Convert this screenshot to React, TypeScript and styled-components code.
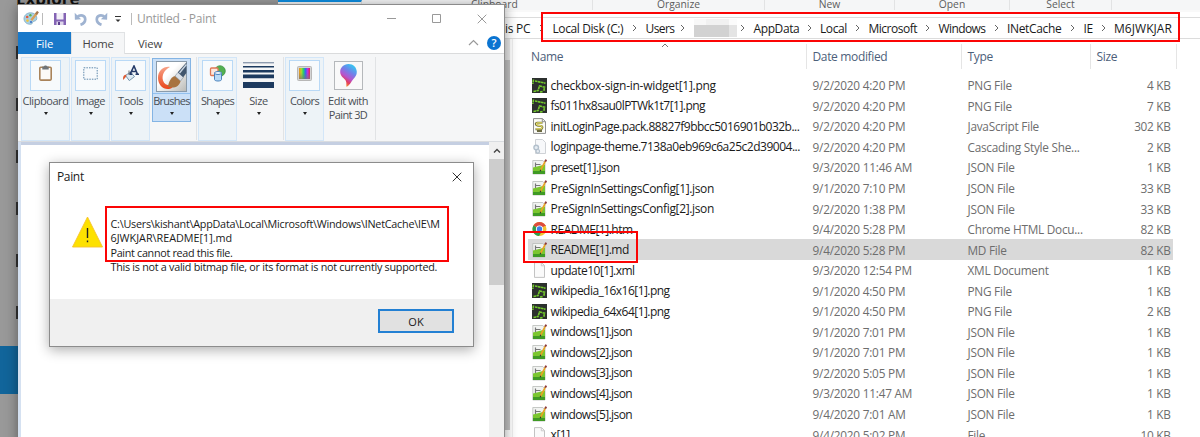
import styled, { createGlobalStyle } from "styled-components";

const GlobalStyle = createGlobalStyle`
  * {
    box-sizing: border-box;
  }
  body {
    margin: 0;
    overflow: hidden;
    font-family: "Open Sans", "Noto Sans", sans-serif;
    font-size: 12px;
    color: #1a1a1a;
  }
  svg {
    display: block;
    flex: none;
  }
`;

const Desktop = styled.main`
  position: relative;
  width: 1200px;
  height: 437px;
  overflow: hidden;
  background: #fff;
`;

const Txt = styled.span<{ $track?: number }>`
  white-space: pre;
  letter-spacing: ${(p) => p.$track ?? 0}px;
`;

/* page behind the windows */

const Backdrop = styled.div`
  position: absolute;
  left: 0;
  top: 0;
  width: 278px;
  height: 437px;
  background: #999;
`;

const BackdropTitle = styled.h2`
  margin: 0 0 0 16px;
  height: 5px;
  font-size: 17px;
  font-weight: 700;
  line-height: 20px;
  color: #111;
  overflow: hidden;

  span {
    display: block;
    margin-top: -11px;
  }
`;

const Stubs = styled.div`
  display: flex;
  flex-direction: column;
  gap: 39px;
  margin: 41px 0 0 16px;
`;

const Stub = styled.div`
  width: 4px;
  height: 13px;
  background: #333;
`;

const BlueBlock = styled.div`
  height: 48px;
  margin-top: 27px;
  background: #11659b;
`;

/* explorer */

const Explorer = styled.section`
  position: absolute;
  left: 278px;
  top: 0;
  width: 922px;
  height: 437px;
  background: #fff;
  display: flex;
  flex-direction: column;
`;

const Groups = styled.div`
  display: flex;
  height: 12px;
  background: #f5f6f7;
  border-bottom: 2px solid #f9f9f9;
`;

const Group = styled.div<{ $w: number; $blue?: boolean }>`
  width: ${(p) => p.$w}px;
  height: 10px;
  flex: none;
  border-right: 1px solid #e2e3e4;
  border-top: ${(p) => (p.$blue ? "2px solid #0d8de0" : "0")};
  font-size: 10.3px;
  line-height: 8px;
  color: #5c5c5c;
  text-align: center;
`;

const Address = styled.div`
  display: flex;
  height: 22px;
  margin: 5px 0 0 210px;
  padding-left: 16px;
  border: 1px solid #dcdcdc;
  border-right: 0;
  align-items: center;
`;

const Crumb = styled.div<{ $w: number }>`
  display: flex;
  flex: none;
  align-items: center;
  justify-content: space-between;
  width: ${(p) => p.$w}px;
  padding-right: 8.5px;
  font-size: 12px;
`;

const Redacted = styled.div`
  display: grid;
  grid-template: 6px 12px / 12px 12px 11px 8px;
  width: 42px;
  height: 18px;

  i:nth-child(-n + 4) {
    background: #f1f1f1;
  }
  i:nth-child(1) {
    background: #f8f8f8;
  }
  i:nth-child(4) {
    background: #fbfbfb;
  }
  i:nth-child(n + 5) {
    background: #d2d2d2;
  }
  i:nth-child(8) {
    background: #e4e4e4;
  }
`;

const Body = styled.div`
  display: flex;
  flex: 1;
  min-height: 0;
`;

const NavScroll = styled.div`
  width: 7px;
  height: 391px;
  margin-left: 225px;
  border-top: 21px solid #e9e9e9;
  background: #c2c2c2;
`;

const NavEdge = styled.div`
  width: 3px;
  border-right: 1px solid #efefef;
`;

const Table = styled.div`
  flex: 1;
  padding: 5px 0 0 12px;
`;

const columns = "281.5px 155px 129px 86.5px";

const Head = styled.div`
  display: grid;
  grid-template-columns: ${columns};
  width: 652px;
  height: 25px;
  margin-bottom: 6px;
  font-size: 12px;
  color: #4c607a;
`;

const HeadCell = styled.div`
  display: flex;
  align-items: center;
  padding-left: 6px;
  border-right: 1px solid #e5e5e5;
`;

const SortMark = styled.svg`
  margin: -22px 0 0 98px;
`;

const Row = styled.div<{ $selected?: boolean }>`
  display: grid;
  grid-template-columns: ${columns};
  align-items: center;
  width: 645px;
  height: 20.56px;
  margin-left: 3px;
  background: ${(p) => (p.$selected ? "#d9d9d9" : "transparent")};
`;

const NameCell = styled.div`
  display: flex;
  align-items: center;
  gap: 3.6px;
  padding-left: 4px;
  font-size: 12px;
`;

const Cell = styled.div<{ $right?: boolean }>`
  padding: 0 ${(p) => (p.$right ? 9.5 : 0)}px 0 3px;
  font-size: 11.8px;
  color: #6d6d6d;
  text-align: ${(p) => (p.$right ? "right" : "left")};
`;

/* paint window */

const PaintWindow = styled.section`
  position: absolute;
  left: 18px;
  top: 4px;
  width: 487px;
  height: 480px;
  background: #fff;
  border-top: 1px solid #8b8b8b;
  border-right: 1px solid #8e8e8e;
  box-shadow: 0 2px 12px rgba(0, 0, 0, 0.42);
`;

const TitleBar = styled.div`
  display: flex;
  align-items: center;
  height: 27px;
  padding-left: 5px;
  font-size: 12px;
  color: #999;
`;

const TitleTools = styled.div`
  display: flex;
  align-items: center;
  width: 114px;
`;

const WindowButtons = styled.div`
  display: flex;
  gap: 36px;
  margin-left: auto;
  padding-right: 17px;
`;

const Tabs = styled.div`
  display: flex;
  height: 22px;
  border-bottom: 1px solid #dadbdc;
`;

const Tab = styled.div<{ $kind: "file" | "active" | "plain" }>`
  display: flex;
  align-items: center;
  justify-content: center;
  width: ${(p) => (p.$kind === "active" ? 54 : p.$kind === "file" ? 53 : 50)}px;
  height: 22px;
  font-size: 11.3px;
  letter-spacing: -0.2px;
  color: ${(p) => (p.$kind === "file" ? "#fff" : "#444")};
  background: ${(p) =>
    p.$kind === "file" ? "#1979ca" : p.$kind === "active" ? "#f5f6f7" : "transparent"};
  border: ${(p) => (p.$kind === "active" ? "1px solid #e0e2e4" : "0")};
  border-bottom: 0;
`;

const Help = styled.div`
  display: flex;
  align-items: center;
  gap: 8px;
  margin-left: auto;
  padding-right: 3px;
`;

const HelpDot = styled.div`
  width: 14px;
  height: 14px;
  border-radius: 50%;
  background: #0b74d1;
  color: #fff;
  font-size: 11px;
  font-weight: 600;
  line-height: 14px;
  text-align: center;
`;

const Ribbon = styled.div`
  display: flex;
  height: 88px;
  padding: 3px 0 0 3px;
  background: #f5f6f7;
  border-bottom: 1px solid #d9dce0;
`;

const Tool = styled.div<{ $w: number; $ml?: number; $kind?: "plain" | "hot" }>`
  display: flex;
  flex-direction: column;
  flex: none;
  align-items: center;
  width: ${(p) => p.$w}px;
  height: ${(p) => (p.$kind === "hot" ? 64 : 84)}px;
  margin-left: ${(p) => p.$ml ?? 1}px;
  margin-top: ${(p) => (p.$kind === "hot" ? 1 : 0)}px;
  padding-top: ${(p) => (p.$kind === "hot" ? 0 : 2)}px;
  border: 1px solid
    ${(p) => (p.$kind === "hot" ? "#84b4e4" : p.$kind === "plain" ? "transparent" : "#d3e6f8")};
  background: ${(p) =>
    p.$kind === "hot" ? "#cbe0f7" : p.$kind === "plain" ? "transparent" : "#edf3f7"};
`;

const ToolIcon = styled.div<{ $kind?: "plain" | "hot" }>`
  display: flex;
  align-items: center;
  justify-content: center;
  width: ${(p) => (p.$kind === "hot" ? 37 : 31)}px;
  height: ${(p) => (p.$kind === "hot" ? 35 : 31)}px;
  padding-bottom: ${(p) => (p.$kind ? 0 : 5)}px;
  flex: none;
  border: ${(p) => (p.$kind ? 0 : 1)}px solid #b9d9f6;
  border-bottom: ${(p) => (p.$kind === "hot" ? "1px solid #93c0ed" : undefined)};
  background: ${(p) => (p.$kind ? "transparent" : "#f7fafc")};
`;

const ToolLabel = styled.div<{ $tight?: boolean }>`
  height: 14px;
  margin-top: ${(p) => (p.$tight ? 0 : 3)}px;
  font-size: 11px;
  line-height: 14px;
  color: #4a4f55;
  white-space: nowrap;
`;

const Drop = styled.i`
  margin-top: 4px;
  border: 2.5px solid transparent;
  border-top: 3px solid #222;
  border-bottom: 0;
`;

const Divider = styled.div<{ $ml: number }>`
  width: 1px;
  height: 83px;
  flex: none;
  margin-left: ${(p) => p.$ml}px;
  background: #e1e3e5;
`;

const Canvas = styled.div`
  display: flex;
  height: 340px;
  border-left: 3px solid #d5e1f1;
`;

const Paper = styled.div`
  flex: 1;
  border-top: 3px solid #c5cfe2;
`;

const Scroll = styled.div`
  width: 15px;
  background: #f0f0f0;
`;

const ScrollArrow = styled.div`
  display: flex;
  align-items: center;
  justify-content: center;
  height: 17px;
`;

const Thumb = styled.div`
  height: 126px;
  background: #cdcdcd;
`;

/* message box */

const Dialog = styled.section`
  position: absolute;
  left: 49px;
  top: 162px;
  width: 425px;
  height: 185px;
  display: flex;
  flex-direction: column;
  background: #fff;
  border: 1px solid #8c8c8c;
  box-shadow: 0 3px 12px rgba(0, 0, 0, 0.32);
`;

const DialogTitle = styled.div`
  display: flex;
  align-items: center;
  justify-content: space-between;
  height: 27px;
  padding: 0 11px 0 7px;
  font-size: 12px;
`;

const DialogBody = styled.div`
  display: flex;
  flex: 1;
  padding: 26px 0 0 22px;
  gap: 7.5px;
`;

const Message = styled.div`
  display: flex;
  flex-direction: column;
  margin-top: 1px;
  font-size: 10.8px;
  line-height: 14.4px;
`;

const DialogFooter = styled.div`
  display: flex;
  justify-content: flex-end;
  height: 47px;
  padding: 10px 19px 0 0;
  background: #f0f0f0;
`;

const OkButton = styled.button`
  width: 76px;
  height: 24px;
  padding: 0;
  border: 2px solid #2380d3;
  background: #e1e1e1;
  font: 11px "Open Sans", sans-serif;
  color: #1a1a1a;
`;

const Marker = styled.div<{ $x: number; $y: number; $w: number; $h: number }>`
  position: absolute;
  left: ${(p) => p.$x}px;
  top: ${(p) => p.$y}px;
  width: ${(p) => p.$w}px;
  height: ${(p) => p.$h}px;
  border: 2px solid #fb0505;
`;

/* icons */

const Chevron = () => (
  <svg width="5" height="8" viewBox="0 0 5 8" fill="none" stroke="#666" strokeWidth="1">
    <path d="M1 1l3 3-3 3" />
  </svg>
);

const Cross = ({ color }: { color: string }) => (
  <svg width="10" height="10" viewBox="0 0 10 10" stroke={color} strokeWidth="1">
    <path d="M.7.7l8.6 8.6M9.3.7L.7 9.3" />
  </svg>
);

const PngIcon = () => (
  <svg width="15" height="15" viewBox="0 0 15 15">
    <path fill="#2c302e" d="M0 0h15v15H0z" />
    <path
      d="M1.5 1.5L.8 6M3 3l10.500 2.200M1.500 13.500l4.500-1 1.500-4.500 5 1.200-.6 3.600M8 14l3-.4"
      fill="none"
      stroke="#74cc2c"
      strokeWidth="1.6"
      strokeDasharray="2.6 .5"
    />
  </svg>
);

const JsIcon = () => (
  <svg width="15" height="16" viewBox="0 0 15 16">
    <path d="M1.5.6h9l3 3v11.800h-12z" fill="#fcfcf6" stroke="#8e8e8e" />
    <path d="M10.300.7v3h3" fill="none" stroke="#8e8e8e" />
    <path
      d="M10.500 4.800H5.200c-2 0-1.800 2.400 0 2.600l3.600.5c2.300.4 2 3.300-.3 3.300H3.500M5 13h5"
      fill="none"
      stroke="#6b6940"
      strokeWidth="2"
    />
    <path d="M10 4.800H5.400c-1.300 0-1.400 2 0 2.400l3.600.7c1.600.4 1.400 2.800-.3 3H4" fill="none" stroke="#e5dd62" strokeWidth="1.2" />
  </svg>
);

const CssIcon = () => (
  <svg width="15" height="16" viewBox="0 0 15 16">
    <path d="M3.5.5h7l3 3v11h-10z" fill="#f7f8fa" stroke="#cfd2d6" />
    <circle cx="4.2" cy="8.5" r="2.3" fill="#e6ecf2" stroke="#b3c0cc" strokeWidth="1.4" />
    <circle cx="5.8" cy="12.3" r="1.8" fill="#e6ecf2" stroke="#b3c0cc" strokeWidth="1.2" />
  </svg>
);

const NppIcon = () => (
  <svg width="15" height="16" viewBox="0 0 15 16">
    <path d="M.8 1.5h10L13 4v11H.8z" fill="#f2f4f2" stroke="#b9bdb9" strokeWidth=".8" />
    <path d="M1 8.5l4-1 8-2V15H1z" fill="#7bc62f" />
    <path d="M1 12h12v3H1z" fill="#3f9a24" />
    <path d="M3.5 3.5V8M3.5 5.5h5" stroke="#777" strokeWidth="1.2" fill="none" />
    <path d="M13.4 2.2L8.6 11" stroke="#e7a324" strokeWidth="1.7" />
    <path d="M14.2.7l-1 1.9" stroke="#8c3b3b" strokeWidth="2" />
    <path d="M8.7 10.8l-.5 1.4" stroke="#333" strokeWidth="1.1" />
  </svg>
);

const ChromeIcon = () => (
  <svg width="15" height="16" viewBox="0 0 15 16">
    <circle cx="7.5" cy="8" r="7" fill="#f4c430" />
    <path d="M7.5 8L1.4 4.5A7 7 0 0 1 13.6 4.5z" fill="#dd4b3e" />
    <path d="M7.5 8L1.4 4.5A7 7 0 0 0 7 15l3-5z" fill="#2f9e4f" />
    <path d="M7.5 4.5h6.1" stroke="#dd4b3e" />
    <circle cx="7.5" cy="8" r="3.6" fill="#fff" />
    <circle cx="7.5" cy="8" r="2.7" fill="#3f7fe8" />
  </svg>
);

const BlankIcon = () => (
  <svg width="15" height="16" viewBox="0 0 15 16">
    <path d="M2.5.6h7l3 3v11.8h-10z" fill="#fafafa" stroke="#bcbcbc" strokeWidth=".9" />
    <path d="M9.3.7v3.1h3.1" fill="none" stroke="#c6c6c6" strokeWidth=".9" />
  </svg>
);

const icons = {
  png: PngIcon,
  js: JsIcon,
  css: CssIcon,
  npp: NppIcon,
  chrome: ChromeIcon,
  blank: BlankIcon,
};

const PaintIcon = () => (
  <svg width="17" height="15" viewBox="0 0 17 15">
    <path
      d="M7.5 1.8C3.8 1.8.8 4.4 1 8c.2 3.4 3.3 5.6 7 5.2 1.7-.2 1.2-1.8 2.2-2.6 1-.7 3.6-.4 3.6-3.3 0-3.3-2.7-5.5-6.3-5.5z"
      fill="#a8d0e4"
      stroke="#7fabc4"
      strokeWidth=".8"
    />
    <circle cx="4.2" cy="6" r="1.3" fill="#e25a3d" />
    <circle cx="7.4" cy="4.3" r="1.2" fill="#5caf4b" />
    <circle cx="4.5" cy="9.6" r="1.3" fill="#edc33d" />
    <circle cx="8" cy="11" r="1.1" fill="#4172c4" />
    <path d="M8.3 9.2L14 2" stroke="#d9a05a" strokeWidth="2.3" />
    <path d="M13 3.2L15 .6" stroke="#a5784e" strokeWidth="2.4" />
  </svg>
);

const SaveIcon = () => (
  <svg width="12" height="12" viewBox="0 0 12 12">
    <path d="M0 0h12v12H0z" fill="#8464b4" />
    <path d="M2.5 0h7v6.5h-7z" fill="#f3f0f8" />
    <path d="M2.5 8.5h7V12h-7z" fill="#ddd5ea" />
    <path d="M4 9h2v3H4z" fill="#5c3f8e" />
  </svg>
);

const UndoIcon = ({ flip }: { flip?: boolean }) => (
  <svg width="13" height="14" viewBox="0 0 13 14">
    <g transform={flip ? "matrix(-1 0 0 1 13 0)" : undefined}>
      <path d="M3 5.2c3.6-3.3 8.4-1.8 8.2 2.4-.1 2.5-1.9 4.2-4.7 5.2" fill="none" stroke="#9fb3d1" strokeWidth="2.7" />
      <path d="M.7.8l.2 7 6.2-.5z" fill="#9fb3d1" />
    </g>
  </svg>
);

const ClipboardIcon = () => (
  <svg width="15" height="17" viewBox="0 0 15 17">
    <rect x="1.8" y="2.3" width="11.4" height="12.8" rx="1" fill="#fbfaf8" stroke="#a9835a" strokeWidth="1.6" />
    <path d="M4.3 1.5h1.6C6.2.2 8.8.2 9.1 1.5h1.6v3H4.3z" fill="#6f7478" />
  </svg>
);

const SelectIcon = () => (
  <svg width="15" height="13" viewBox="0 0 15 13">
    <rect x=".8" y=".8" width="13.4" height="11.4" fill="none" stroke="#5d88ac" strokeWidth="1" strokeDasharray="1.5 1.1" />
  </svg>
);

const ToolsIcon = () => (
  <svg width="17" height="17" viewBox="0 0 17 17">
    <path d="M3.5 10.5L8.5 7l4 4.6-5.2 4z" fill="#dceaf3" stroke="#7695ad" />
    <path d="M4.5 9.5C1.8 9.6.6 11.8 1.2 15l2.6-3z" fill="#dc5a32" />
    <path d="M7 10V5.5" stroke="#6c6c6c" />
    <path d="M8 9.3L12 1l3.5 8.3M9.7 6.5h4.5M7.5 9.3h2.8M13.5 9.3H17" fill="none" stroke="#263c69" strokeWidth="1.6" />
  </svg>
);

const BrushIcon = () => (
  <svg width="31" height="31" viewBox="0 0 31 31">
    <defs>
      <linearGradient id="brushBg" x1="0" y1="0" x2="1" y2="1">
        <stop offset=".4" stopColor="#fff" />
        <stop offset="1" stopColor="#b9b9b5" />
      </linearGradient>
      <linearGradient id="stroke" x1="0" y1="0" x2="0" y2="1">
        <stop offset="0" stopColor="#f7a287" />
        <stop offset="1" stopColor="#e9451a" />
      </linearGradient>
    </defs>
    <rect x=".5" y=".5" width="30" height="30" fill="url(#brushBg)" stroke="#8a9bab" />
    <path d="M14 6C8 5 1.800 9.500 2 17c.2 7.200 5.400 12.200 12 10.800 2-.4 3.400-2 3-4.200-3.600 1.400-8.600.4-10-4.200C5.600 14.600 8 9 14 6z" fill="url(#stroke)" />
    <path d="M12 25.500c.6-3.600 2.500-9.500 7.200-10.400l5.400 4.800C23.400 25.700 17 28.200 12 25.500z" fill="#a8733f" />
    <path d="M19 15l3-3.600 5.400 4.800-2.800 3.800z" fill="#d9dfe6" stroke="#71808f" strokeWidth=".5" />
    <path d="M21.800 11.300L30.400 1.500V12l-3.200 4.200z" fill="#41566e" />
    <path d="M23.500 12L30.400 3.500" stroke="#c8d4e0" strokeWidth="1.4" />
  </svg>
);

const ShapesIcon = () => (
  <svg width="17" height="17" viewBox="0 0 17 17">
    <circle cx="11" cy="6" r="5.3" fill="#52b052" stroke="#398e3d" strokeWidth=".7" />
    <rect x="1.5" y="3" width="7.5" height="7.5" rx="1" fill="#fbe7dd" stroke="#df7855" strokeWidth="1.3" />
    <path d="M5.5 8v6.5c0 2 7 2 7 0V8z" fill="#b9dbf6" stroke="#4b83bd" />
    <ellipse cx="9" cy="8" rx="3.5" ry="1.5" fill="#eff7fe" stroke="#4b83bd" />
  </svg>
);

const SizeIcon = () => (
  <svg width="31" height="27" viewBox="0 0 31 27" fill="#1d3a5f">
    <path d="M0 0h31v1.4H0z" fill="#8e9caf" />
    <path d="M0 4h31v1.5H0zM0 8h31v2.4H0zM0 12.5h31v3.7H0zM0 20h31v6H0z" />
  </svg>
);

const ColorsIcon = () => (
  <svg width="15" height="15" viewBox="0 0 15 15">
    <defs>
      <linearGradient id="hue">
        <stop offset="0" stopColor="#f08a1d" />
        <stop offset=".2" stopColor="#b5d82a" />
        <stop offset=".4" stopColor="#2ad06a" />
        <stop offset=".58" stopColor="#2b6ff0" />
        <stop offset=".78" stopColor="#c22de0" />
        <stop offset="1" stopColor="#ef2440" />
      </linearGradient>
      <linearGradient id="shade" x1="0" y1="0" x2="0" y2="1">
        <stop offset=".4" stopColor="#777" stopOpacity="0" />
        <stop offset="1" stopColor="#777" stopOpacity=".7" />
      </linearGradient>
    </defs>
    <rect x=".5" y=".5" width="14" height="14" rx="1" fill="#d5d5d5" stroke="#b7b7b7" />
    <path d="M2 2h11v11H2z" fill="url(#hue)" />
    <path d="M2 2h11v11H2z" fill="url(#shade)" />
  </svg>
);

const Paint3dIcon = () => (
  <svg width="29" height="29" viewBox="0 0 29 29">
    <defs>
      <linearGradient id="drop" x1=".8" y1="0" x2=".3" y2="1">
        <stop offset="0" stopColor="#2bd3f2" />
        <stop offset=".35" stopColor="#6e83ea" />
        <stop offset=".6" stopColor="#b455d0" />
        <stop offset=".78" stopColor="#e43b5d" />
        <stop offset="1" stopColor="#f9b02b" />
      </linearGradient>
    </defs>
    <rect x=".5" y=".5" width="28" height="28" fill="#f9f9f9" stroke="#b5b8bb" />
    <path d="M14.5 3c-5 0-8.5 3.7-8.3 8.2.2 4.4 4.2 6 5.6 8.5 1 2 .2 4.4.8 6.3 3.4-2.2 4.6-5.4 6.8-8 1.8-2.1 3.6-4 3.4-7.2C22.6 6.2 19.3 3 14.5 3z" fill="url(#drop)" />
  </svg>
);

const WarningIcon = () => (
  <svg width="31" height="32" viewBox="0 0 31 32">
    <path d="M15.5 1L30.5 31H.5z" fill="#fde100" stroke="#f6c22c" strokeWidth=".9" strokeLinejoin="round" />
    <path d="M15.5 12v10M15.5 24.5v1.8" stroke="#222" strokeWidth="1.4" />
  </svg>
);

type FileRow = {
  icon: keyof typeof icons;
  name: string;
  date: string;
  type: string;
  size: string;
  track: number;
};

const files: FileRow[] = [
  { icon: "png", name: "checkbox-sign-in-widget[1].png", date: "9/2/2020 4:20 PM", type: "PNG File", size: "4 KB", track: -0.28 },
  { icon: "png", name: "fs011hx8sau0lPTWk1t7[1].png", date: "9/2/2020 4:20 PM", type: "PNG File", size: "7 KB", track: -0.53 },
  { icon: "js", name: "initLoginPage.pack.88827f9bbcc5016901b032b...", date: "9/2/2020 4:20 PM", type: "JavaScript File", size: "302 KB", track: -0.51 },
  { icon: "css", name: "loginpage-theme.7138a0eb969c6a25c2d39004...", date: "9/2/2020 4:20 PM", type: "Cascading Style She...", size: "2 KB", track: -0.48 },
  { icon: "npp", name: "preset[1].json", date: "9/3/2020 11:46 AM", type: "JSON File", size: "1 KB", track: -0.57 },
  { icon: "npp", name: "PreSignInSettingsConfig[1].json", date: "9/1/2020 7:10 PM", type: "JSON File", size: "33 KB", track: -0.36 },
  { icon: "npp", name: "PreSignInSettingsConfig[2].json", date: "9/2/2020 1:38 PM", type: "JSON File", size: "33 KB", track: -0.36 },
  { icon: "chrome", name: "README[1].htm", date: "9/4/2020 5:28 PM", type: "Chrome HTML Docu...", size: "82 KB", track: -0.5 },
  { icon: "npp", name: "README[1].md", date: "9/4/2020 5:28 PM", type: "MD File", size: "82 KB", track: -0.5 },
  { icon: "blank", name: "update10[1].xml", date: "9/3/2020 12:54 PM", type: "XML Document", size: "1 KB", track: -0.52 },
  { icon: "png", name: "wikipedia_16x16[1].png", date: "9/1/2020 4:50 PM", type: "PNG File", size: "1 KB", track: -0.54 },
  { icon: "png", name: "wikipedia_64x64[1].png", date: "9/1/2020 4:50 PM", type: "PNG File", size: "2 KB", track: -0.54 },
  { icon: "npp", name: "windows[1].json", date: "9/1/2020 7:01 PM", type: "JSON File", size: "1 KB", track: -0.6 },
  { icon: "npp", name: "windows[2].json", date: "9/1/2020 7:01 PM", type: "JSON File", size: "1 KB", track: -0.6 },
  { icon: "npp", name: "windows[3].json", date: "9/2/2020 5:05 PM", type: "JSON File", size: "1 KB", track: -0.6 },
  { icon: "npp", name: "windows[4].json", date: "9/3/2020 11:47 AM", type: "JSON File", size: "1 KB", track: -0.6 },
  { icon: "npp", name: "windows[5].json", date: "9/4/2020 7:01 AM", type: "JSON File", size: "1 KB", track: -0.6 },
  { icon: "blank", name: "x[1]", date: "9/4/2020 5:02 PM", type: "File", size: "10 KB", track: -0.5 },
];

const crumbs = [
  { name: "is PC", w: 47.5, track: -0.3 },
  { name: "Local Disk (C:)", w: 93, track: -0.4 },
  { name: "Users", w: 48, track: -0.6 },
  { name: "", w: 60, track: 0 },
  { name: "AppData", w: 66.5, track: -0.4 },
  { name: "Local", w: 48.5, track: -0.4 },
  { name: "Microsoft", w: 70, track: -0.5 },
  { name: "Windows", w: 68.5, track: -0.6 },
  { name: "INetCache", w: 76.5, track: -0.35 },
  { name: "IE", w: 30.5, track: -0.3 },
  { name: "M6JWKJAR", w: 70, track: 0.05 },
];

function ExplorerWindow() {
  return (
    <Explorer>
      <Groups>
        <Group $w={84} $blue />
        <Group $w={231}>
          <Txt>{"             Clipboard"}</Txt>
        </Group>
        <Group $w={172}>Organize</Group>
        <Group $w={130}>New</Group>
        <Group $w={115}>Open</Group>
        <Group $w={102}>Select</Group>
      </Groups>
      <Address>
        {crumbs.map((c, i) => (
          <Crumb key={i} $w={c.w}>
            {c.name ? (
              <Txt $track={c.track}>{c.name}</Txt>
            ) : (
              <Redacted>
                {Array.from({ length: 8 }, (_, n) => (
                  <i key={n} />
                ))}
              </Redacted>
            )}
            {i < crumbs.length - 1 && <Chevron />}
          </Crumb>
        ))}
      </Address>
      <Body>
        <NavScroll />
        <NavEdge />
        <Table>
          <Head>
            <HeadCell>
              <Txt $track={-0.35}>Name</Txt>
              <SortMark width="8" height="5" viewBox="0 0 8 5" fill="none" stroke="#777">
                <path d="M1 4l3-3 3 3" />
              </SortMark>
            </HeadCell>
            <HeadCell>
              <Txt $track={-0.35}>Date modified</Txt>
            </HeadCell>
            <HeadCell>
              <Txt $track={-0.35}>Type</Txt>
            </HeadCell>
            <HeadCell>
              <Txt $track={-0.35}>Size</Txt>
            </HeadCell>
          </Head>
          {files.map((f) => {
            const Icon = icons[f.icon];
            return (
              <Row key={f.name} $selected={f.name === "README[1].md"}>
                <NameCell>
                  <Icon />
                  <Txt $track={f.track}>{f.name}</Txt>
                </NameCell>
                <Cell>
                  <Txt $track={-0.22}>{f.date}</Txt>
                </Cell>
                <Cell>
                  <Txt $track={-0.25}>{f.type}</Txt>
                </Cell>
                <Cell $right>
                  <Txt $track={-0.3}>{f.size}</Txt>
                </Cell>
              </Row>
            );
          })}
        </Table>
      </Body>
    </Explorer>
  );
}

function Paint() {
  return (
    <PaintWindow>
      <TitleBar>
        <TitleTools>
          <PaintIcon />
          <svg width="14" height="14" stroke="#bbb">
            <path d="M2.5 1v12" />
          </svg>
          <SaveIcon />
          <svg width="8" height="1" />
          <UndoIcon />
          <svg width="8" height="1" />
          <UndoIcon flip />
          <svg width="28" height="14" viewBox="0 0 28 14">
            <path d="M7 4.5h6" stroke="#333" />
            <path d="M7.5 7.5h5L10 10z" fill="#333" />
            <path d="M23.5 1v12" stroke="#bbb" />
          </svg>
        </TitleTools>
        <Txt $track={-0.28}>Untitled - Paint</Txt>
        <WindowButtons>
          <svg width="9" height="9" stroke="#999">
            <path d="M0 4.5h9" />
          </svg>
          <svg width="9" height="9" fill="none" stroke="#999">
            <path d="M.5.5h8v8h-8z" />
          </svg>
          <Cross color="#999" />
        </WindowButtons>
      </TitleBar>
      <Tabs>
        <Tab $kind="file">File</Tab>
        <Tab $kind="active">Home</Tab>
        <Tab $kind="plain">View</Tab>
        <Help>
          <svg width="11" height="7" viewBox="0 0 11 7" fill="none" stroke="#999" strokeWidth="1.2">
            <path d="M1 6l4.5-4.5L10 6" />
          </svg>
          <HelpDot>?</HelpDot>
        </Help>
      </Tabs>
      <Ribbon>
        <Tool $w={49} $ml={0}>
          <ToolIcon><ClipboardIcon /></ToolIcon>
          <ToolLabel><Txt $track={-0.45}>Clipboard</Txt></ToolLabel>
          <Drop />
        </Tool>
        <Tool $w={39}>
          <ToolIcon><SelectIcon /></ToolIcon>
          <ToolLabel><Txt $track={-0.5}>Image</Txt></ToolLabel>
          <Drop />
        </Tool>
        <Tool $w={39}>
          <ToolIcon><ToolsIcon /></ToolIcon>
          <ToolLabel><Txt $track={-0.5}>Tools</Txt></ToolLabel>
          <Drop />
        </Tool>
        <Tool $w={39} $ml={2} $kind="hot">
          <ToolIcon $kind="hot"><BrushIcon /></ToolIcon>
          <ToolLabel $tight><Txt $track={-0.75}>Brushes</Txt></ToolLabel>
          <Drop />
        </Tool>
        <Divider $ml={5} />
        <Tool $w={39}>
          <ToolIcon><ShapesIcon /></ToolIcon>
          <ToolLabel><Txt $track={-0.65}>Shapes</Txt></ToolLabel>
          <Drop />
        </Tool>
        <Tool $w={39} $ml={2} $kind="plain">
          <ToolIcon $kind="plain"><SizeIcon /></ToolIcon>
          <ToolLabel><Txt $track={-0.4}>Size</Txt></ToolLabel>
          <Drop />
        </Tool>
        <Divider $ml={5} />
        <Tool $w={39}>
          <ToolIcon><ColorsIcon /></ToolIcon>
          <ToolLabel><Txt $track={-0.6}>Colors</Txt></ToolLabel>
          <Drop />
        </Tool>
        <Tool $w={46} $kind="plain">
          <ToolIcon $kind="plain"><Paint3dIcon /></ToolIcon>
          <ToolLabel><Txt $track={-0.5}>Edit with</Txt></ToolLabel>
          <ToolLabel $tight><Txt $track={-0.6}>Paint 3D</Txt></ToolLabel>
        </Tool>
        <Divider $ml={4} />
      </Ribbon>
      <Canvas>
        <Paper />
        <Scroll>
          <ScrollArrow>
            <svg width="8" height="6" viewBox="0 0 8 6" fill="none" stroke="#444" strokeWidth="1.4">
              <path d="M1 4.5l3-3 3 3" />
            </svg>
          </ScrollArrow>
          <Thumb />
        </Scroll>
      </Canvas>
    </PaintWindow>
  );
}

function ErrorDialog() {
  return (
    <Dialog>
      <DialogTitle>
        <Txt $track={-0.35}>Paint</Txt>
        <Cross color="#333" />
      </DialogTitle>
      <DialogBody>
        <WarningIcon />
        <Message>
          <Txt $track={-0.24}>{"C:\\Users\\kishant\\AppData\\Local\\Microsoft\\Windows\\INetCache\\IE\\M"}</Txt>
          <Txt $track={0}>{"6JWKJAR\\README[1].md"}</Txt>
          <Txt $track={-0.32}>Paint cannot read this file.</Txt>
          <Txt $track={-0.28}>This is not a valid bitmap file, or its format is not currently supported.</Txt>
        </Message>
      </DialogBody>
      <DialogFooter>
        <OkButton>OK</OkButton>
      </DialogFooter>
    </Dialog>
  );
}

function App() {
  return (
    <Desktop>
      <GlobalStyle />
      <Backdrop>
        <BackdropTitle>
          <span>Explore</span>
        </BackdropTitle>
        <Stubs>
          <Stub />
          <Stub />
          <Stub />
          <Stub />
          <Stub />
          <Stub />
        </Stubs>
        <BlueBlock />
      </Backdrop>
      <ExplorerWindow />
      <Paint />
      <ErrorDialog />
      <Marker $x={541} $y={12} $w={639} $h={30} />
      <Marker $x={105} $y={206} $w={344} $h={56} />
      <Marker $x={523} $y={231} $w={115} $h={32} />
    </Desktop>
  );
}

export default App;
